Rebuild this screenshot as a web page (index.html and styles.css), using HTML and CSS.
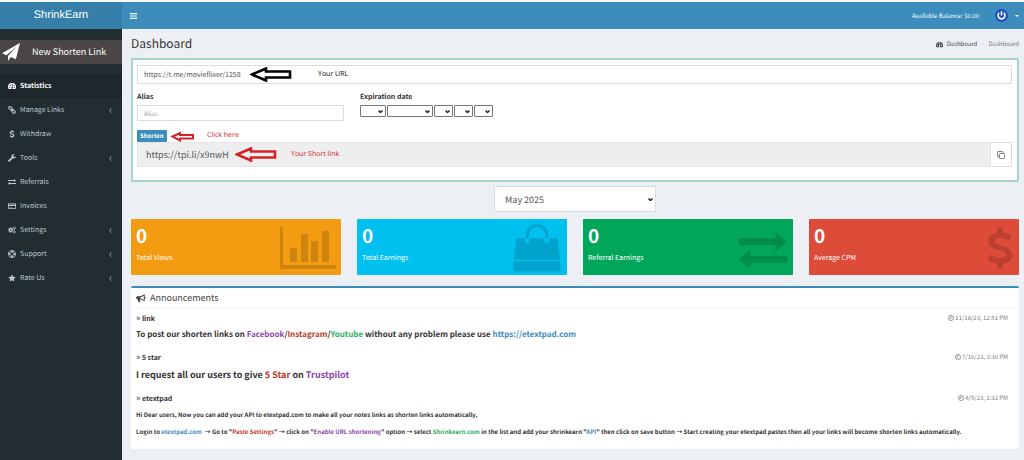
FILE: index.html
```
<!DOCTYPE html>
<html lang="en">
  <head>
    <meta charset="utf-8">
    <title>Dashboard - ShrinkEarn</title>
    <link rel="stylesheet" href="styles.css">
  </head>
  <body>
    <svg class="sprite" aria-hidden="true">
      <symbol id="i-plane" viewBox="0 0 18 18"><path d="M18 0 0 10.2l4.400 2L14.600 3.600 6 12.900V18l2.900-3.900 5 2.200z"/></symbol>
      <symbol id="i-dashboard" viewBox="0 0 16 14"><path fill-rule="evenodd" d="M8 1a8 8 0 0 0-8 8c0 1.500.4 3 1.200 4h13.600c.8-1 1.200-2.500 1.200-4a8 8 0 0 0-8-8zM3.200 8a1.200 1.200 0 1 1 0 2.400 1.200 1.200 0 0 1 0-2.400zM4.600 4.200a1.200 1.200 0 1 1 0 2.400 1.200 1.200 0 0 1 0-2.400zM8 2.600A1.200 1.200 0 1 1 8 5a1.200 1.200 0 0 1 0-2.400zM9 5.500l1.200.3-1 3.500A1.700 1.700 0 1 1 7.800 9zM12 4.600A1.100 1.100 0 1 1 12 6.800a1.100 1.100 0 0 1 0-2.200zM12.800 8a1.200 1.200 0 1 1 0 2.400 1.200 1.200 0 0 1 0-2.400z"/></symbol>
      <symbol id="i-link" viewBox="0 0 16 16"><g fill="none" stroke="currentColor" stroke-width="2"><rect x="1" y="2" width="8" height="5" rx="2.500" transform="rotate(45 5 4.500)"/><rect x="7" y="8.500" width="8" height="5" rx="2.500" transform="rotate(45 11 11)"/><path d="M5.500 5.500l5 5"/></g></symbol>
      <symbol id="i-dollar" viewBox="0 0 10 16"><path d="M4 0h2v2c1.400.2 2.600.7 3.500 1.500L8.300 5.300C7.300 4.500 6.300 4.100 5 4.100c-1.300 0-2 .5-2 1.200C3 6.200 4 6.500 5.700 7.100 8 7.900 9.800 8.700 9.800 10.900c0 1.700-1.300 2.900-3.800 3.200V16H4v-1.900C2.500 13.900 1.100 13.300 0 12.300l1.400-1.800c1.100.9 2.300 1.400 3.700 1.400 1.400 0 2.100-.5 2.100-1.300 0-.9-1-1.200-2.700-1.800C2.300 8.100.5 7.300.5 5.300.5 3.600 1.800 2.300 4 2z"/></symbol>
      <symbol id="i-wrench" viewBox="0 0 16 16"><path d="M15.700 4.200 13 5.800l-2.200-1.200V2.200L13.500.6A4.800 4.800 0 0 0 7 6.500L.8 12.600a1.500 1.500 0 0 0 0 2.200l.4.400a1.500 1.500 0 0 0 2.200 0L9.500 9a4.800 4.800 0 0 0 6.200-4.800z"/></symbol>
      <symbol id="i-exchange" viewBox="0 0 50 38"><path d="M0 6.500h38V0l12 10-12 10v-6.500H0zM50 24.500H12V18L0 28l12 10v-6.500h38z"/></symbol>
      <symbol id="i-card" viewBox="0 0 16 14"><path fill-rule="evenodd" d="M1.500 1h13A1.500 1.500 0 0 1 16 2.500v9a1.500 1.500 0 0 1-1.500 1.500h-13A1.500 1.500 0 0 1 0 11.500v-9A1.500 1.500 0 0 1 1.500 1zM1.500 2.200v1.600h13V2.200zM1.500 7v4.500h13V7zM2.500 9.500h2v1h-2zM5.500 9.500h3v1h-3z"/></symbol>
      <symbol id="i-cogs" viewBox="0 0 16 14"><g fill="none" stroke="currentColor"><circle cx="5.500" cy="7" r="3" stroke-width="2.600"/><circle cx="5.500" cy="7" r="4.800" stroke-width="1.600" stroke-dasharray="1.900 1.870"/><circle cx="13" cy="3.300" r="1.700" stroke-width="1.500"/><circle cx="13" cy="3.300" r="2.700" stroke-width="1" stroke-dasharray="1.200 1.600"/><circle cx="13" cy="10.700" r="1.700" stroke-width="1.500"/><circle cx="13" cy="10.700" r="2.700" stroke-width="1" stroke-dasharray="1.200 1.600"/></g></symbol>
      <symbol id="i-ring" viewBox="0 0 16 16"><g fill="none" stroke="currentColor"><circle cx="8" cy="8" r="7.200" stroke-width="1.500"/><circle cx="8" cy="8" r="3.600" stroke-width="1.300"/><circle cx="8" cy="8" r="5.500" stroke-width="3.500" stroke-dasharray="4.320 4.320" stroke-dashoffset="2.160"/></g></symbol>
      <symbol id="i-star" viewBox="0 0 16 16"><path d="M8 .5l2.300 4.900 5.400.7-3.900 3.700.9 5.300L8 12.500l-4.700 2.600.9-5.300L.3 6.100l5.400-.7z"/></symbol>
      <symbol id="i-bars" viewBox="0 0 12 10"><path d="M0 0h12v2H0zM0 4h12v2H0zM0 8h12v2H0z"/></symbol>
      <symbol id="i-angle" viewBox="0 0 6 10"><path d="M5 1 1 5l4 4" fill="none" stroke="currentColor" stroke-width="1.500"/></symbol>
      <symbol id="i-caret" viewBox="0 0 8 4"><path d="M0 0h8L4 4z"/></symbol>
      <symbol id="i-copy" viewBox="0 0 16 16"><g fill="none" stroke="currentColor" stroke-width="1.500"><rect x="5" y="5" width="10" height="10" rx="1.500"/><path d="M12 5V2.500A1.500 1.500 0 0 0 10.500 1h-8A1.500 1.500 0 0 0 1 2.500v8A1.500 1.500 0 0 0 2.500 12H5"/></g></symbol>
      <symbol id="i-horn" viewBox="0 0 18 16"><path fill-rule="evenodd" d="M15.500 0v5a1.700 1.700 0 0 1 0 3.400v5C13 11.300 10.300 10 7.600 9.700c-.9.400-1 1.400-.3 2-.6.800-.1 1.500.9 2.300-.6 1.100-2.900 1.200-3.900.2-.6-1.700-1.200-2.900-.6-4.700H2.200C1 9.500.5 8.700.5 7.800V5.700C.5 4.700 1.200 4 2.200 4h4.500C9.700 4 12.800 2.200 15.500 0zM14 3C12 4.500 10 5.300 8 5.600v2.500c2 .3 4 1.100 6 2.500z"/></symbol>
      <symbol id="i-clock" viewBox="0 0 16 16"><g fill="none" stroke="currentColor" stroke-width="2"><circle cx="8" cy="8" r="6.800"/><path d="M8 3.500v5H4.500"/></g></symbol>
      <symbol id="i-chart" viewBox="0 0 56 42"><path d="M0 0h3v38h53v4H0zM10 21h7v14h-7zM21 7h7v28h-7zM31 14h7v21h-7zM42 4h7v31h-7z"/></symbol>
      <symbol id="i-bag" viewBox="0 0 49 48"><path d="M3.500 14H12v3a2.500 2.500 0 0 0 5 0v-3h15v3a2.500 2.500 0 0 0 5 0v-3h8.500l2.500 22H1zM.8 37.500h47.400L49 46a2 2 0 0 1-2 2H2a2 2 0 0 1-2-2z"/><path d="M14.500 14v-3a10 10 0 0 1 20 0v3" fill="none" stroke="currentColor" stroke-width="3"/></symbol>
      <symbol id="i-arrow" viewBox="0 0 42 15"><path d="M2 7.500 16 1.500v3h24v6H16v3z" fill="none" stroke="currentColor" stroke-width="2.600"/></symbol>
      <symbol id="i-arrow-small" viewBox="0 0 25 11"><path d="M2.500 5.500 10 2v2h13v3.500H10v2z" fill="none" stroke="currentColor" stroke-width="2"/></symbol>
      <symbol id="i-power" viewBox="0 0 14 14"><circle cx="7" cy="7" r="7" fill="#1d4fc4"/><path d="M4.500 4.200a3.700 3.700 0 1 0 5 0M7 2.500V7" fill="none" stroke="#fff" stroke-width="1.700"/></symbol>
    </svg>

    <header class="main-header">
      <a class="logo" href="#">ShrinkEarn</a>
      <nav class="navbar">
        <button class="toggle" type="button" aria-label="Toggle navigation"><svg><use href="#i-bars"/></svg></button>
        <span class="balance">Available Balance: $0.00</span>
        <a class="user" href="#" aria-label="Account"><svg class="avatar"><use href="#i-power"/></svg><svg class="caret"><use href="#i-caret"/></svg></a>
      </nav>
    </header>

    <div class="wrapper">
      <aside class="sidebar">
        <a class="new-link" href="#"><svg><use href="#i-plane"/></svg><span>New Shorten Link</span></a>
        <ul class="menu">
          <li class="active"><a href="#"><svg><use href="#i-dashboard"/></svg>Statistics</a></li>
          <li><a href="#"><svg><use href="#i-link"/></svg>Manage Links<svg class="angle"><use href="#i-angle"/></svg></a></li>
          <li><a href="#"><svg><use href="#i-dollar"/></svg>Withdraw</a></li>
          <li><a href="#"><svg><use href="#i-wrench"/></svg>Tools<svg class="angle"><use href="#i-angle"/></svg></a></li>
          <li><a href="#"><svg><use href="#i-exchange"/></svg>Referrals</a></li>
          <li><a href="#"><svg><use href="#i-card"/></svg>Invoices</a></li>
          <li><a href="#"><svg><use href="#i-cogs"/></svg>Settings<svg class="angle"><use href="#i-angle"/></svg></a></li>
          <li><a href="#"><svg><use href="#i-ring"/></svg>Support<svg class="angle"><use href="#i-angle"/></svg></a></li>
          <li><a href="#"><svg><use href="#i-star"/></svg>Rate Us<svg class="angle"><use href="#i-angle"/></svg></a></li>
        </ul>
      </aside>

      <main class="content">
        <div class="content-header">
          <h1>Dashboard</h1>
          <div class="breadcrumb"><svg><use href="#i-dashboard"/></svg><a href="#">Dashboard</a><span class="sep">–</span><span>Dashboard</span></div>
        </div>

        <form class="shorten-box">
          <div class="field">
            <input class="url" type="text" value="https://t.me/movieflixer/1258" aria-label="Your URL">
            <div class="note note-url"><svg><use href="#i-arrow"/></svg><span>Your URL</span></div>
          </div>
          <div class="options">
            <div class="option">
              <label for="alias">Alias</label>
              <input id="alias" class="alias" type="text" placeholder="Alias">
            </div>
            <div class="option">
              <label for="exp-day">Expiration date</label>
              <div class="dates">
                <select id="exp-day" class="day"><option></option></select>
                <select class="month" aria-label="Month"><option></option></select>
                <select aria-label="Year"><option></option></select>
                <select aria-label="Hour"><option></option></select>
                <select aria-label="Minute"><option></option></select>
              </div>
            </div>
          </div>
          <div class="submit">
            <button class="btn" type="button">Shorten</button>
            <div class="note note-click"><svg><use href="#i-arrow-small"/></svg><span>Click here</span></div>
          </div>
          <div class="field result">
            <input type="text" value="https://tpi.li/x9nwH" readonly aria-label="Your Short link">
            <button class="copy" type="button" aria-label="Copy"><svg><use href="#i-copy"/></svg></button>
            <div class="note note-short"><svg><use href="#i-arrow"/></svg><span>Your Short link</span></div>
          </div>
        </form>

        <select class="period" aria-label="Period"><option>May 2025</option></select>

        <div class="stats">
          <div class="stat yellow"><h3>0</h3><p>Total Views</p><svg class="chart"><use href="#i-chart"/></svg></div>
          <div class="stat aqua"><h3>0</h3><p>Total Earnings</p><svg class="bag"><use href="#i-bag"/></svg></div>
          <div class="stat green"><h3>0</h3><p>Referral Earnings</p><svg class="exchange"><use href="#i-exchange"/></svg></div>
          <div class="stat red"><h3>0</h3><p>Average CPM</p><svg class="dollar"><use href="#i-dollar"/></svg></div>
        </div>

        <section class="news">
          <h2><svg><use href="#i-horn"/></svg>Announcements</h2>
          <article>
            <div class="news-head"><h4><span>»</span> link</h4><time><svg><use href="#i-clock"/></svg>11/18/23, 12:51 PM</time></div>
            <p class="medium">To post our shorten links on <span class="purple">Facebook</span>/<span class="brick">Instagram</span>/<span class="leaf">Youtube</span> without any problem please use <a href="#">https://etextpad.com</a></p>
          </article>
          <article>
            <div class="news-head"><h4><span>»</span> 5 star</h4><time><svg><use href="#i-clock"/></svg>7/16/23, 3:30 PM</time></div>
            <p class="large">I request all our users to give <span class="brick">5 Star</span> on <span class="purple">Trustpilot</span></p>
          </article>
          <article>
            <div class="news-head"><h4><span>»</span> etextpad</h4><time><svg><use href="#i-clock"/></svg>4/5/23, 1:32 PM</time></div>
            <p>Hi Dear users, Now you can add your API to etextpad.com to make all your notes links as shorten links automatically,</p>
            <p>Login to <a href="#">etextpad.com</a>&nbsp; → Go to "<span class="brick">Paste Settings</span>" → click on "<span class="purple">Enable URL shortening</span>" option → select <span class="leaf">Shrinkearn.com</span> in the list and add your shrinkearn "<a href="#">API</a>" then click on save button → Start creating your etextpad pastes then all your links will become shorten links automatically.</p>
          </article>
        </section>
      </main>
    </div>
  </body>
</html>
```
FILE: styles.css
```
* {
  box-sizing: border-box;
}

body {
  margin: 0;
  min-height: 100vh;
  display: flex;
  flex-direction: column;
  border-top: 2px solid #f4fafc;
  background: #ecf0f5;
  color: #333;
  font-family: "Noto Sans CJK SC", "Open Sans", sans-serif;
  font-size: 7px;
  line-height: 12px;
  text-rendering: geometricPrecision;
}

h1, h2, h3, h4, p, ul {
  margin: 0;
  padding: 0;
}

a {
  color: #3c8dbc;
  text-decoration: none;
}

svg {
  display: block;
  flex: none;
  fill: currentColor;
}

input, select, button {
  margin: 0;
  border-radius: 0;
  font-family: inherit;
  text-rendering: inherit;
}

select {
  appearance: none;
  background: #fff url("data:image/svg+xml,%3Csvg xmlns='http://www.w3.org/2000/svg' viewBox='0 0 10 6'%3E%3Cpath d='M1 1l4 4 4-4' fill='none' stroke='%23222' stroke-width='3'/%3E%3C/svg%3E") no-repeat right 2px center / 5px 3px;
}

.sprite {
  position: absolute;
  width: 0;
  height: 0;
}

/* header */
.main-header {
  display: flex;
  height: 27px;
  color: #fff;
}

.logo {
  width: 122px;
  background: #367fa9;
  color: #fff;
  font: 11px/26px "Liberation Sans", sans-serif;
  text-align: center;
}

.navbar {
  flex: 1;
  display: flex;
  align-items: center;
  padding: 0 5px 0 8px;
  background: #3c8dbc;
}

.toggle {
  padding: 0;
  border: 0;
  background: none;
  color: #fff;
}

.toggle svg {
  width: 7px;
  height: 6px;
}

.balance {
  margin-left: auto;
  font-size: 6px;
}

.user {
  display: flex;
  align-items: center;
  gap: 7px;
  margin-left: 16px;
  color: #fff;
}

.avatar {
  width: 13px;
  height: 13px;
}

.caret {
  width: 4px;
  height: 2px;
}

/* sidebar */
.wrapper {
  flex: 1;
  display: flex;
}

.sidebar {
  width: 122px;
  padding-top: 11px;
  background: #222d32;
}

.new-link {
  display: flex;
  align-items: center;
  gap: 12px;
  height: 24px;
  padding-left: 2px;
  background: #4a4646;
  color: #fff;
  font-size: 9px;
}

.new-link svg {
  width: 18px;
  height: 18px;
}

.menu {
  margin-top: 10px;
  list-style: none;
}

.menu a {
  display: flex;
  align-items: center;
  gap: 4px;
  height: 24px;
  padding: 0 10px 0 8px;
  color: #b8c7ce;
}

.menu svg {
  width: 8px;
  height: 8px;
}

.menu .angle {
  width: 3px;
  height: 5px;
  margin-left: auto;
}

.menu .active a {
  background: #1e282c;
  color: #fff;
  font-weight: bold;
}

/* content */
.content {
  flex: 1;
  min-width: 0;
  padding: 7px 5px 11px 9px;
}

.content-header {
  display: flex;
  align-items: center;
  justify-content: space-between;
  height: 16px;
  margin-bottom: 6px;
}

h1 {
  font-size: 12px;
  font-weight: normal;
  line-height: 16px;
}

.breadcrumb {
  display: flex;
  align-items: center;
  gap: 4px;
  color: #777;
  font-size: 6px;
}

.breadcrumb a,
.breadcrumb svg {
  color: #444;
}

.breadcrumb svg {
  width: 7px;
  height: 7px;
}

.breadcrumb .sep {
  color: #bbb;
}

.shorten-box {
  padding: 5px 5px 13px 4px;
  border: 2px solid #a5d6c8;
  border-radius: 2px;
  background: #fff;
}

.field,
.submit {
  position: relative;
  display: flex;
}

.url,
.alias {
  width: 100%;
  border: 1px solid #ddd;
  padding: 0 6px;
  background: #fff;
  color: #555;
}

.url {
  height: 19px;
  font-size: 7px;
}

.alias {
  height: 16px;
  font-size: 6px;
}

.alias::placeholder {
  color: #999;
}

.options {
  display: flex;
  gap: 16px;
  margin: 7px 0 9px;
}

.option {
  width: 207px;
}

.option label {
  display: block;
  margin-bottom: 2px;
  font-weight: bold;
}

.dates {
  display: flex;
  gap: 1px;
}

.dates select {
  width: 19px;
  height: 12px;
  padding: 0;
  border: 1px solid #767676;
  border-radius: 1px;
  font-size: 6px;
}

.dates .day {
  width: 26px;
}

.dates .month {
  width: 46px;
}

.btn {
  height: 12px;
  padding: 0 3px;
  border: 0;
  border-radius: 1px;
  background: #3c8dbc;
  color: #fff;
  font-size: 6px;
  font-weight: bold;
  line-height: 12px;
}

.result input {
  flex: 1;
  height: 25px;
  padding: 0 8px;
  border: 1px solid #e4e4e4;
  background: #eee;
  color: #555;
  font-size: 9px;
}

.copy {
  display: flex;
  align-items: center;
  justify-content: center;
  width: 21px;
  padding: 0;
  border: 1px solid #ddd;
  border-left: 0;
  background: #fff;
  color: #555;
}

.copy svg {
  width: 8px;
  height: 8px;
}

/* hand-drawn hints over the form */
.note {
  position: absolute;
  top: 0;
  bottom: 0;
  display: flex;
  align-items: center;
  gap: 26px;
  color: #d2232a;
  font-family: "Open Sans", sans-serif;
  pointer-events: none;
}

.note svg {
  width: 42px;
  height: 15px;
}

.note-url {
  left: 113px;
  color: #000;
}

.note-click {
  left: 33px;
  gap: 12px;
}

.note-click svg {
  width: 25px;
  height: 11px;
}

.note-short {
  left: 98px;
  gap: 14px;
}

.period {
  display: block;
  width: 162px;
  height: 26px;
  margin: 4px auto 7px;
  padding: 0 10px;
  border: 1px solid #d8dce2;
  color: #555;
  font-size: 9px;
}

.stats {
  display: grid;
  grid-template-columns: repeat(4, 1fr);
  gap: 16px;
}

.stat {
  position: relative;
  height: 56px;
  padding: 7px 5px;
  border-radius: 1px;
  color: #fff;
}

.stat h3 {
  font-size: 19px;
  line-height: 20px;
}

.stat p {
  margin-top: 6px;
}

.stat svg {
  position: absolute;
  color: rgba(0, 0, 0, .15);
}

.yellow { background: #f39c12; }
.aqua { background: #00c0ef; }
.green { background: #00a65a; }
.red { background: #dd4b39; }

.stat .chart {
  top: 8px;
  right: 5px;
  width: 56px;
  height: 42px;
}

.stat .bag {
  top: 5px;
  right: 6px;
  width: 48px;
  height: 48px;
}

.stat .exchange {
  top: 13px;
  right: 5px;
  width: 50px;
  height: 37px;
}

.stat .dollar {
  top: 5px;
  right: 6px;
  width: 26px;
  height: 48px;
}

/* announcements */
.news {
  margin-top: 11px;
  padding-bottom: 11px;
  border-top: 2px solid #3c8dbc;
  border-radius: 2px;
  background: #fff;
}

.news h2 {
  display: flex;
  align-items: center;
  gap: 4px;
  height: 21px;
  padding: 0 5px;
  border-bottom: 1px solid #f7f7f7;
  color: #444;
  font-size: 9px;
  font-weight: normal;
}

.news h2 svg {
  width: 10px;
  height: 9px;
}

.news article {
  padding: 3px 11px 0 5px;
  font-weight: bold;
}

.news article + article {
  padding-top: 10px;
}

.news-head {
  display: flex;
  justify-content: space-between;
  height: 12px;
}

.news h4 {
  font-size: 7px;
}

.news h4 span {
  font-size: 9px;
  font-weight: normal;
}

.news time {
  display: flex;
  align-items: center;
  gap: 1px;
  color: #777;
  font-size: 6px;
  font-weight: normal;
}

.news time svg {
  width: 6px;
  height: 6px;
}

.news p {
  margin-top: 5px;
  font-size: 6px;
}

.news .medium {
  font-size: 8px;
}

.news .large {
  font-size: 9px;
  line-height: 14px;
}

.purple { color: #8e44ad; }
.brick { color: #c0392b; }
.leaf { color: #27ae60; }
```
